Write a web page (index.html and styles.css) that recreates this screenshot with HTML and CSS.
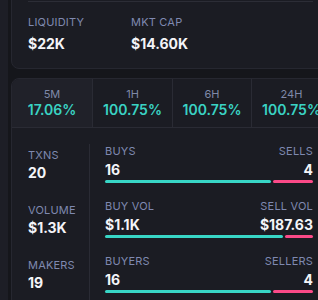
FILE: index.html
```html
<!DOCTYPE html>
<html lang="en">
<head>
    <meta charset="UTF-8">
    <meta name="viewport" content="width=device-width, initial-scale=1.0">
    <title>Token Stats</title>
    <link rel="stylesheet" href="styles.css">
</head>
<body>
    <div class="page">
        <div class="card stats-card">
            <div class="rule"></div>
            <div class="stats">
                <div class="stat">
                    <div class="label">LIQUIDITY</div>
                    <div class="value">$22K</div>
                </div>
                <div class="stat">
                    <div class="label">MKT CAP</div>
                    <div class="value">$14.60K</div>
                </div>
            </div>
        </div>

        <div class="card txn-card">
            <div class="tabs">
                <div class="tab active">
                    <div class="tab-label">5M</div>
                    <div class="tab-value">17.06%</div>
                </div>
                <div class="tab">
                    <div class="tab-label">1H</div>
                    <div class="tab-value">100.75%</div>
                </div>
                <div class="tab">
                    <div class="tab-label">6H</div>
                    <div class="tab-value">100.75%</div>
                </div>
                <div class="tab">
                    <div class="tab-label">24H</div>
                    <div class="tab-value">100.75%</div>
                </div>
            </div>

            <div class="txn-body">
                <div class="totals">
                    <div class="total">
                        <div class="label">TXNS</div>
                        <div class="value">20</div>
                    </div>
                    <div class="total">
                        <div class="label">VOLUME</div>
                        <div class="value">$1.3K</div>
                    </div>
                    <div class="total">
                        <div class="label">MAKERS</div>
                        <div class="value">19</div>
                    </div>
                </div>

                <div class="splits">
                    <div class="split">
                        <div class="split-head">
                            <div class="side">
                                <div class="label">BUYS</div>
                                <div class="value">16</div>
                            </div>
                            <div class="side right">
                                <div class="label">SELLS</div>
                                <div class="value">4</div>
                            </div>
                        </div>
                        <div class="bar">
                            <div class="bar-buy" style="width: 80%"></div>
                            <div class="bar-sell"></div>
                        </div>
                    </div>
                    <div class="split">
                        <div class="split-head">
                            <div class="side">
                                <div class="label">BUY VOL</div>
                                <div class="value">$1.1K</div>
                            </div>
                            <div class="side right">
                                <div class="label">SELL VOL</div>
                                <div class="value">$187.63</div>
                            </div>
                        </div>
                        <div class="bar">
                            <div class="bar-buy" style="width: 85.4%"></div>
                            <div class="bar-sell"></div>
                        </div>
                    </div>
                    <div class="split">
                        <div class="split-head">
                            <div class="side">
                                <div class="label">BUYERS</div>
                                <div class="value">16</div>
                            </div>
                            <div class="side right">
                                <div class="label">SELLERS</div>
                                <div class="value">4</div>
                            </div>
                        </div>
                        <div class="bar">
                            <div class="bar-buy" style="width: 80%"></div>
                            <div class="bar-sell"></div>
                        </div>
                    </div>
                </div>
            </div>
        </div>
    </div>
</body>
</html>
```

FILE: styles.css
```css
html, body {
    margin: 0;
    padding: 0;
    overflow: hidden;
}

body {
    background: #1d1e26;
    font-family: Inter, "Noto Sans", sans-serif;
    color: #f2f2f7;
}

.page {
    margin-left: 8px;
    padding-left: 3px;
    background: #15161b;
    width: 340px;
    min-height: 300px;
}

.card {
    width: 320px;
    box-sizing: border-box;
    background: #1b1c23;
    border: 1px solid #262730;
    border-radius: 8px;
}

.stats-card {
    margin-top: -20px;
    padding: 20px 17px 16px 16px;
}

.rule {
    height: 1px;
    background: #2c2d36;
    margin-bottom: 13px;
}

.stats {
    display: grid;
    grid-template-columns: 103px 103px;
}

.label {
    font-size: 11px;
    line-height: 14px;
    color: #7f89b0;
    letter-spacing: 0.2px;
}

.value {
    font-size: 14px;
    line-height: 17px;
    font-weight: 700;
    color: #f4f4f8;
}

.stat .value {
    margin-top: 6px;
}

.txn-card {
    margin-top: 9px;
    overflow: hidden;
}

.tabs {
    display: grid;
    grid-template-columns: 80px 80px 79px 80px;
    border-bottom: 1px solid #2a2b34;
}

.tab {
    padding: 8px 0 9px;
    text-align: center;
    border-left: 1px solid #2a2b34;
}

.tab:first-child {
    border-left: none;
}

.tab.active {
    background: #202129;
}

.tab-label {
    font-size: 11px;
    line-height: 14px;
    color: #7f89a8;
}

.tab-value {
    font-size: 14px;
    line-height: 17px;
    font-weight: 600;
    color: #3ad3c3;
}

.txn-body {
    display: flex;
    padding: 16px 17px 8px 16px;
}

.totals {
    width: 61px;
    padding-top: 4px;
    border-right: 1px solid #2a2b34;
}

.total {
    height: 55px;
}

.total .value {
    margin-top: 2px;
}

.splits {
    flex: 1;
    padding-left: 15px;
}

.split {
    height: 55px;
}

.split-head {
    display: flex;
    justify-content: space-between;
}

.side .value {
    margin-top: 3px;
}

.side.right {
    text-align: right;
}

.bar {
    display: flex;
    gap: 2px;
    margin-top: 2px;
    height: 3px;
}

.bar-buy {
    background: #38d6c6;
    border-radius: 2px;
}

.bar-sell {
    flex: 1;
    background: #fb4a88;
    border-radius: 2px;
}
```
